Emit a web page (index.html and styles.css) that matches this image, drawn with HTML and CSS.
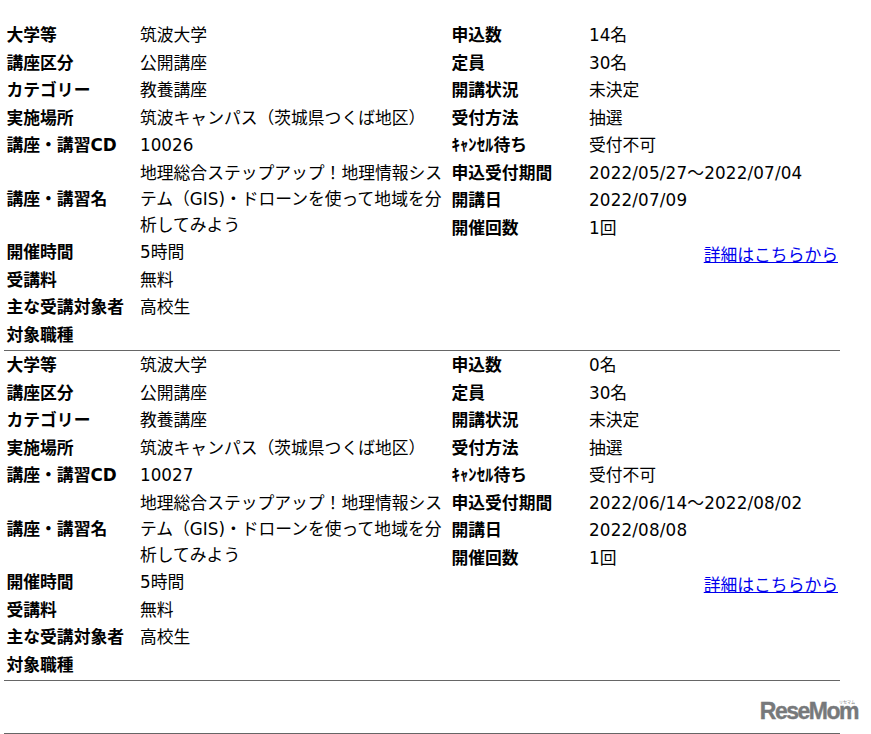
FILE: index.html
```html
<!DOCTYPE html>
<html lang="ja">
<head>
<meta charset="utf-8">
<title>講座一覧</title>
<link rel="stylesheet" href="styles.css">
</head>
<body>
<div class="list">
  <section class="course">
    <dl class="col col-left">
      <dt>大学等</dt><dd>筑波大学</dd>
      <dt>講座区分</dt><dd>公開講座</dd>
      <dt>カテゴリー</dt><dd>教養講座</dd>
      <dt>実施場所</dt><dd>筑波キャンパス（茨城県つくば地区）</dd>
      <dt>講座・講習CD</dt><dd>10026</dd>
      <dt>講座・講習名</dt><dd class="multi">地理総合ステップアップ！地理情報システム（GIS)・ドローンを使って地域を分析してみよう</dd>
      <dt>開催時間</dt><dd>5時間</dd>
      <dt>受講料</dt><dd>無料</dd>
      <dt>主な受講対象者</dt><dd>高校生</dd>
      <dt>対象職種</dt><dd></dd>
    </dl>
    <div class="col-right">
      <dl class="col">
        <dt>申込数</dt><dd>14名</dd>
        <dt>定員</dt><dd>30名</dd>
        <dt>開講状況</dt><dd>未決定</dd>
        <dt>受付方法</dt><dd>抽選</dd>
        <dt>ｷｬﾝｾﾙ待ち</dt><dd>受付不可</dd>
        <dt>申込受付期間</dt><dd class="date">2022/05/27～2022/07/04</dd>
        <dt>開講日</dt><dd class="date">2022/07/09</dd>
        <dt>開催回数</dt><dd>1回</dd>
      </dl>
      <p class="more"><a href="#">詳細はこちらから</a></p>
    </div>
  </section>
  <section class="course">
    <dl class="col col-left">
      <dt>大学等</dt><dd>筑波大学</dd>
      <dt>講座区分</dt><dd>公開講座</dd>
      <dt>カテゴリー</dt><dd>教養講座</dd>
      <dt>実施場所</dt><dd>筑波キャンパス（茨城県つくば地区）</dd>
      <dt>講座・講習CD</dt><dd>10027</dd>
      <dt>講座・講習名</dt><dd class="multi">地理総合ステップアップ！地理情報システム（GIS)・ドローンを使って地域を分析してみよう</dd>
      <dt>開催時間</dt><dd>5時間</dd>
      <dt>受講料</dt><dd>無料</dd>
      <dt>主な受講対象者</dt><dd>高校生</dd>
      <dt>対象職種</dt><dd></dd>
    </dl>
    <div class="col-right">
      <dl class="col">
        <dt>申込数</dt><dd>0名</dd>
        <dt>定員</dt><dd>30名</dd>
        <dt>開講状況</dt><dd>未決定</dd>
        <dt>受付方法</dt><dd>抽選</dd>
        <dt>ｷｬﾝｾﾙ待ち</dt><dd>受付不可</dd>
        <dt>申込受付期間</dt><dd class="date">2022/06/14～2022/08/02</dd>
        <dt>開講日</dt><dd class="date">2022/08/08</dd>
        <dt>開催回数</dt><dd>1回</dd>
      </dl>
      <p class="more"><a href="#">詳細はこちらから</a></p>
    </div>
  </section>
</div>
<div class="logo-row">
  <div class="logo"><span class="logo-kana">リセマム</span><span class="logo-name">ReseMom</span></div>
</div>
</body>
</html>
```
FILE: styles.css
```css
html, body {
  margin: 0;
  padding: 0;
  background: #fff;
}
body {
  width: 871px;
  height: 734px;
  overflow: hidden;
  font-family: "DejaVu Sans", "Noto Sans CJK JP", sans-serif;
  font-size: 16.8px;
  color: #000;
}
.list {
  width: 836px;
  margin-left: 4px;
  padding-top: 21px;
}
.course {
  display: flex;
  height: 330px;
  padding-top: 1px;
  box-sizing: border-box;
  border-bottom: 1px solid #666;
}
.col {
  display: grid;
  margin: 0;
  align-content: start;
  align-items: center;
}
.col-left {
  width: 445px;
  padding-left: 2.5px;
  box-sizing: border-box;
  grid-template-columns: 133.5px 1fr;
}
.col-right {
  flex: 1;
  padding-left: 2.5px;
}
.col-right .col {
  grid-template-columns: 137.5px 1fr;
}
dt, dd {
  margin: 0;
  height: 27.5px;
  line-height: 27.5px;
  white-space: nowrap;
}
dt {
  font-weight: 700;
}
dd.multi {
  height: 79.5px;
  line-height: 26px;
  white-space: normal;
  padding-top: 0.75px;
  box-sizing: border-box;
}
dd.date {
  letter-spacing: 0.15px;
}
.more {
  margin: 0;
  height: 27.5px;
  line-height: 27.5px;
  text-align: right;
  padding-right: 2px;
}
.more a {
  color: #00e;
  text-decoration: underline;
}
.logo-row {
  width: 836px;
  margin-left: 4px;
  height: 53px;
  padding-top: 19px;
  box-sizing: border-box;
  border-bottom: 1px solid #666;
  display: flex;
  justify-content: flex-end;
}
.logo {
  display: flex;
  flex-direction: column;
  align-items: flex-end;
  width: 98px;
  margin-right: -18px;
  color: #77797b;
}
.logo-name {
  margin-top: -2px;
  font-family: "Liberation Sans", sans-serif;
  font-weight: 700;
  font-size: 23px;
  line-height: 18px;
  letter-spacing: -1.5px;
  white-space: nowrap;
  -webkit-text-stroke: 0.4px #77797b;
}
.logo-kana {
  font-family: "Noto Sans CJK JP", sans-serif;
  font-size: 4px;
  line-height: 4px;
  padding-right: 3px;
  white-space: nowrap;
}
```
